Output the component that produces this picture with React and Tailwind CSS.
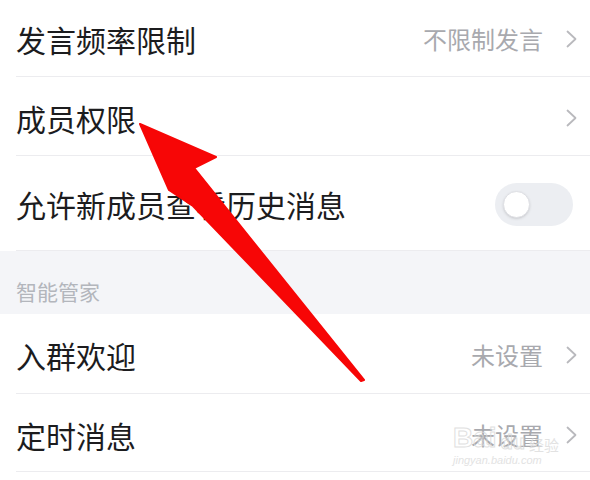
import React from 'react';

// Chevron used at row ends
function Chevron() {
  return (
    <svg width="11" height="18" viewBox="0 0 11 18" className="shrink-0">
      <polyline points="1.5,1.5 9.5,9 1.5,16.5" fill="none" stroke="#b9b9bd" strokeWidth="1.8" strokeLinecap="round" strokeLinejoin="round" />
    </svg>
  );
}

// Off toggle
function Toggle() {
  return (
    <div className="w-[78px] h-[43px] rounded-full bg-[#eceef2] flex items-center pl-2 mr-1">
      <div className="w-[27px] h-[27px] rounded-full bg-white border border-[#dedfe4] shadow-sm" />
    </div>
  );
}

// Settings row
function Row({ label, value, chevron, toggle, height }) {
  return (
    <div className={`ml-4 pr-[13px] border-b border-[#ececef] ${height} flex items-center justify-between`}>
      <span className="text-[30px] leading-none text-[#1c1c1e]">{label}</span>
      <div className="flex items-center gap-[23px]">
        {value && <span className="text-[24px] leading-none text-[#a8a9ae]">{value}</span>}
        {chevron && <Chevron />}
        {toggle && <Toggle />}
      </div>
    </div>
  );
}

export default function App() {
  return (
    <div className="relative w-[590px] h-[480px] overflow-hidden bg-white font-['Noto_Sans_CJK_SC','Noto_Sans',sans-serif]">
      <Row label="发言频率限制" value="不限制发言" chevron height="h-[77px] pt-[2px]" />
      <Row label="成员权限" chevron height="h-[79px] pt-[4px]" />
      <Row label="允许新成员查看历史消息" toggle height="h-[95px] pt-[2px]" />

      {/* Section header */}
      <div className="bg-[#f4f5f8] h-[63px] pl-4 pt-[30px]">
        <span className="block text-[21px] leading-[21px] text-[#b3b6bc]">智能管家</span>
      </div>

      <Row label="入群欢迎" value="未设置" chevron height="h-[80px] pt-[2px]" />
      <Row label="定时消息" value="未设置" chevron height="h-[78px] pt-[4px]" />

      {/* Watermark */}
      <div className="absolute left-[453px] top-[424px] pointer-events-none flex flex-col items-start opacity-80">
        <div className="flex items-end gap-1">
          <span className="text-[28px] leading-none font-bold text-transparent [-webkit-text-stroke:1px_#d9d9d9] font-['Liberation_Sans',sans-serif]">Bai</span>
          <span className="text-[20px] leading-none font-bold text-transparent [-webkit-text-stroke:1px_#d9d9d9] font-['Liberation_Sans',sans-serif]">du</span>
          <span className="text-[15px] leading-none text-[#dcdcdc]">经验</span>
        </div>
        <span className="mt-[3px] text-[11px] leading-none italic text-[#dcdcdc] font-['Liberation_Sans',sans-serif]">jingyan.baidu.com</span>
      </div>

      {/* Red arrow annotation */}
      <svg className="absolute inset-0 pointer-events-none" width="590" height="480" viewBox="0 0 590 480">
        <polygon
          points="140,124 216,157 194,168 364,380 361,381 193,206 169,190"
          fill="#f70606"
          stroke="#f70606"
          strokeWidth="2"
          strokeLinejoin="round"
        />
      </svg>
    </div>
  );
}
